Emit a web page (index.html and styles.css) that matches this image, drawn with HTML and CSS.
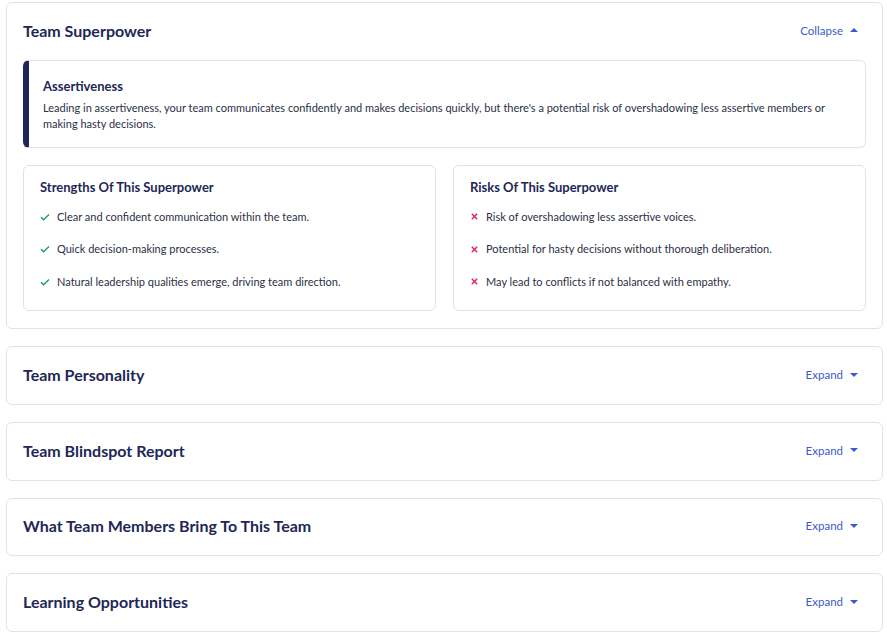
FILE: index.html
```html
<!DOCTYPE html>
<html lang="en">
<head>
    <meta charset="UTF-8">
    <title>Team Report</title>
    <link rel="stylesheet" href="styles.css">
</head>
<body>
    <div class="report">
        <!-- Superpower section (open) -->
        <div class="section">
            <div class="section-head">
                <h2>Team Superpower</h2>
                <a class="toggle" href="#">Collapse <span class="caret up"></span></a>
            </div>
            <div class="highlight">
                <h3>Assertiveness</h3>
                <p>Leading in assertiveness, your team communicates confidently and makes decisions quickly, but there's a potential risk of overshadowing less assertive members or making hasty decisions.</p>
            </div>
            <div class="pair">
                <div class="box">
                    <h4>Strengths Of This Superpower</h4>
                    <ul>
                        <li><svg class="ico ok" viewBox="0 0 10 10"><path d="M1 5.2l2.6 2.6L9 2.4"/></svg>Clear and confident communication within the team.</li>
                        <li><svg class="ico ok" viewBox="0 0 10 10"><path d="M1 5.2l2.6 2.6L9 2.4"/></svg>Quick decision-making processes.</li>
                        <li><svg class="ico ok" viewBox="0 0 10 10"><path d="M1 5.2l2.6 2.6L9 2.4"/></svg>Natural leadership qualities emerge, driving team direction.</li>
                    </ul>
                </div>
                <div class="box">
                    <h4>Risks Of This Superpower</h4>
                    <ul>
                        <li><svg class="ico bad" viewBox="0 0 10 10"><path d="M2 2l6 6M8 2l-6 6"/></svg>Risk of overshadowing less assertive voices.</li>
                        <li><svg class="ico bad" viewBox="0 0 10 10"><path d="M2 2l6 6M8 2l-6 6"/></svg>Potential for hasty decisions without thorough deliberation.</li>
                        <li><svg class="ico bad" viewBox="0 0 10 10"><path d="M2 2l6 6M8 2l-6 6"/></svg>May lead to conflicts if not balanced with empathy.</li>
                    </ul>
                </div>
            </div>
        </div>

        <!-- Collapsed sections -->
        <div class="section">
            <div class="section-head">
                <h2>Team Personality</h2>
                <a class="toggle" href="#">Expand <span class="caret"></span></a>
            </div>
        </div>
        <div class="section">
            <div class="section-head">
                <h2>Team Blindspot Report</h2>
                <a class="toggle" href="#">Expand <span class="caret"></span></a>
            </div>
        </div>
        <div class="section">
            <div class="section-head">
                <h2>What Team Members Bring To This Team</h2>
                <a class="toggle" href="#">Expand <span class="caret"></span></a>
            </div>
        </div>
        <div class="section">
            <div class="section-head">
                <h2>Learning Opportunities</h2>
                <a class="toggle" href="#">Expand <span class="caret"></span></a>
            </div>
        </div>
    </div>
</body>
</html>
```

FILE: styles.css
```css
body {
    margin: 0;
    font-family: Lato, 'Open Sans', sans-serif;
    background-color: #ffffff;
    color: #2b2f45;
}
.report {
    padding: 2px 4px 4px 6px;
    display: flex;
    flex-direction: column;
    gap: 17px;
}
.section {
    border: 1px solid #dfe1f3;
    border-radius: 6px;
    padding: 15px 16px 17px;
    background: #fff;
}
.section-head {
    display: flex;
    align-items: center;
    justify-content: space-between;
    height: 24.7px;
}
.section-head h2 {
    margin: 0;
    font-size: 16px;
    font-weight: 700;
    color: #1e2756;
}
.toggle {
    display: flex;
    align-items: center;
    gap: 7px;
    padding-right: 8px;
    font-size: 11.5px;
    color: #3d5bc6;
    text-decoration: none;
}
.caret {
    width: 0;
    height: 0;
    border-left: 4px solid transparent;
    border-right: 4px solid transparent;
    border-top: 4px solid #3d5bc6;
}
.caret.up {
    border-top: none;
    border-bottom: 4px solid #3d5bc6;
}
.highlight {
    margin-top: 17px;
    border: 1px solid #dfe1f3;
    border-left: 6px solid #1e2756;
    border-radius: 6px;
    padding: 16px 14px 15px;
}
.highlight h3 {
    margin: 0 0 5px;
    font-size: 13px;
    font-weight: 700;
    line-height: 18px;
    color: #1e2756;
}
.highlight p {
    margin: 0;
    font-size: 11px;
    line-height: 16px;
    color: #2b2f45;
}
.pair {
    margin-top: 17px;
    display: grid;
    grid-template-columns: 1fr 1fr;
    gap: 17px;
}
.box {
    border: 1px solid #dfe1f3;
    border-radius: 6px;
    padding: 12px 16px 4px;
}
.box h4 {
    margin: 0 0 13px;
    font-size: 13px;
    font-weight: 700;
    line-height: 18px;
    color: #1e2756;
}
.box ul {
    list-style: none;
    margin: 0;
    padding: 0;
}
.box li {
    display: flex;
    align-items: center;
    font-size: 11px;
    line-height: 16px;
    margin-bottom: 16.5px;
    color: #2b2f45;
}
.ico {
    width: 10px;
    height: 10px;
    margin-right: 7px;
    fill: none;
    stroke-width: 1.4;
    flex-shrink: 0;
}
.ok {
    stroke: #1f9d57;
}
.bad {
    stroke: #e0245e;
    stroke-width: 1.6;
    width: 9px;
    height: 9px;
}
```
